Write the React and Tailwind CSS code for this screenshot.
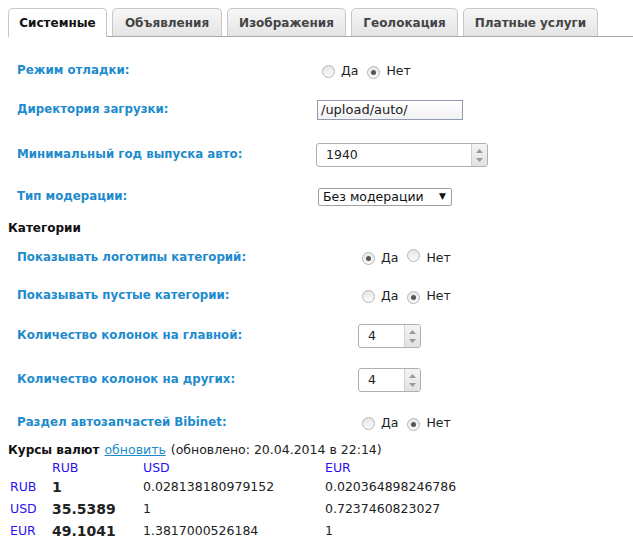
import React from 'react';

const tabs = [
  { name: 'Системные', w: 'w-[99px]', active: true },
  { name: 'Объявления', w: 'w-[110px]' },
  { name: 'Изображения', w: 'w-[119px]' },
  { name: 'Геолокация', w: 'w-[107px]' },
  { name: 'Платные услуги', w: 'w-[135px]' },
];

function Radio({ checked }) {
  return (
    <span className="inline-flex items-center justify-center w-[13px] h-[13px] rounded-full border border-[#b5b5b5] bg-gradient-to-b from-[#e6e6e6] to-[#fafafa] shrink-0">
      {checked && <span className="w-[5px] h-[5px] rounded-full bg-[#555]" />}
    </span>
  );
}

function YesNo({ yes }) {
  return (
    <div className="flex items-center text-[12.5px] text-[#222] pl-1">
      <Radio checked={yes} />
      <span className="ml-[6px]">Да</span>
      <span className="ml-[9px]"><Radio checked={!yes} /></span>
      <span className="ml-[6px]">Нет</span>
    </div>
  );
}

function Spin({ value, w }) {
  return (
    <div className={`${w} h-[24px] flex border border-[#b0b0b0] rounded-[3px] bg-white overflow-hidden`}>
      <div className="flex-1 flex items-center pl-[9px] text-[12.5px] text-[#222]">{value}</div>
      <div className="w-[16px] border-l border-[#d0d0d0] bg-gradient-to-b from-[#f4f4f4] to-[#e2e2e2] flex flex-col items-center justify-center gap-[5px]">
        <svg width="7" height="4" viewBox="0 0 7 4"><path d="M0 4 L3.5 0 L7 4 Z" fill="#9a9a9a" /></svg>
        <svg width="7" height="4" viewBox="0 0 7 4"><path d="M0 0 L3.5 4 L7 0 Z" fill="#9a9a9a" /></svg>
      </div>
    </div>
  );
}

function Row({ h, label, col = 'pl-[300px]', children }) {
  return (
    <div className={`${h} flex items-center`}>
      <div className="w-0 whitespace-nowrap pl-[17px] font-bold text-[11.8px] text-[#1e8bcd]">{label}</div>
      <div className={col}>{children}</div>
    </div>
  );
}

export default function App() {
  return (
    <div className="w-[633px] h-[547px] bg-white overflow-hidden text-[#222]" style={{ fontFamily: '"DejaVu Sans", Verdana, sans-serif' }}>
      {/* вкладки */}
      <div className="ml-2 mt-2 flex gap-[5px] border-b border-[#aaa]">
        {tabs.map(t => (
          <div
            key={t.name}
            className={`${t.w} flex items-center justify-center rounded-t-[5px] border border-b-0 border-[#c8c8c8] font-bold text-[12px] ${
              t.active ? 'h-[29px] -mb-px bg-white text-[#111] border-[#bbb]' : 'h-[28px] bg-gradient-to-b from-[#f7f7f7] to-[#e4e4e4] text-[#444]'
            }`}
          >
            {t.name}
          </div>
        ))}
      </div>

      <div className="pt-[15px]">
        <Row h="h-[38px]" label="Режим отладки:" col="pl-[301px]">
          <YesNo yes={false} />
        </Row>
        <Row h="h-[40px]" label="Директория загрузки:">
          <div className="w-[146px] h-[20px] border border-[#8f9aad] bg-gradient-to-b from-[#fff] to-[#f1f1f4] flex items-center pl-[3px] text-[13px] text-[#222]">
            /upload/auto/
          </div>
        </Row>
        <Row h="h-[50px]" label="Минимальный год выпуска авто:" col="pl-[299px]">
          <Spin value="1940" w="w-[172px]" />
        </Row>
        <Row h="h-[34px]" label="Тип модерации:" col="pl-[301px]">
          <div className="w-[134px] h-[18px] border border-[#a0a0a0] rounded-[2px] flex items-center justify-between pl-[4px] pr-[5px] text-[12.5px] text-[#111]">
            <span>Без модерации</span>
            <span className="text-[9px]">▼</span>
          </div>
        </Row>

        <div className="h-[28px] flex items-center pl-2 font-bold text-[12px] text-[#111]">Категории</div>

        <Row h="h-[32px]" label="Показывать логотипы категорий:" col="pl-[341px]">
          <YesNo yes={true} />
        </Row>
        <Row h="h-[44px]" label="Показывать пустые категории:" col="pl-[341px]">
          <YesNo yes={false} />
        </Row>
        <Row h="h-[36px]" label="Количество колонок на главной:" col="pl-[341px]">
          <Spin value="4" w="w-[63px]" />
        </Row>
        <Row h="h-[52px]" label="Количество колонок на других:" col="pl-[341px]">
          <Spin value="4" w="w-[63px]" />
        </Row>
        <Row h="h-[34px]" label="Раздел автозапчастей Bibinet:" col="pl-[341px]">
          <YesNo yes={false} />
        </Row>

        {/* курсы валют */}
        <div className="h-[20px] flex items-center pl-2 text-[12.5px] text-[#222] whitespace-nowrap">
          <b className="text-[12px] text-[#111]">Курсы валют</b>
          <a href="#" className="ml-[5px] text-[#1e8bcd] underline">обновить</a>
          <span className="ml-[5px]">(обновлено: 20.04.2014 в 22:14)</span>
        </div>
        <div className="pl-2 grid grid-cols-[44px_91px_182px_1fr] text-[12.5px] text-[#222]">
          <div className="h-[16px]" />
          <div className="h-[16px] flex items-center text-[#2a11f0]">RUB</div>
          <div className="h-[16px] flex items-center text-[#2a11f0]">USD</div>
          <div className="h-[16px] flex items-center text-[#2a11f0]">EUR</div>

          <div className="h-[22px] flex items-center pl-[2px] text-[#2a11f0]">RUB</div>
          <div className="h-[22px] flex items-center font-bold text-[14px]">1</div>
          <div className="h-[22px] flex items-center">0.028138180979152</div>
          <div className="h-[22px] flex items-center">0.020364898246786</div>

          <div className="h-[22px] flex items-center pl-[2px] text-[#2a11f0]">USD</div>
          <div className="h-[22px] flex items-center font-bold text-[14px]">35.5389</div>
          <div className="h-[22px] flex items-center">1</div>
          <div className="h-[22px] flex items-center">0.7237460823027</div>

          <div className="h-[22px] flex items-center pl-[2px] text-[#2a11f0]">EUR</div>
          <div className="h-[22px] flex items-center font-bold text-[14px]">49.1041</div>
          <div className="h-[22px] flex items-center">1.3817000526184</div>
          <div className="h-[22px] flex items-center">1</div>
        </div>
      </div>
    </div>
  );
}
